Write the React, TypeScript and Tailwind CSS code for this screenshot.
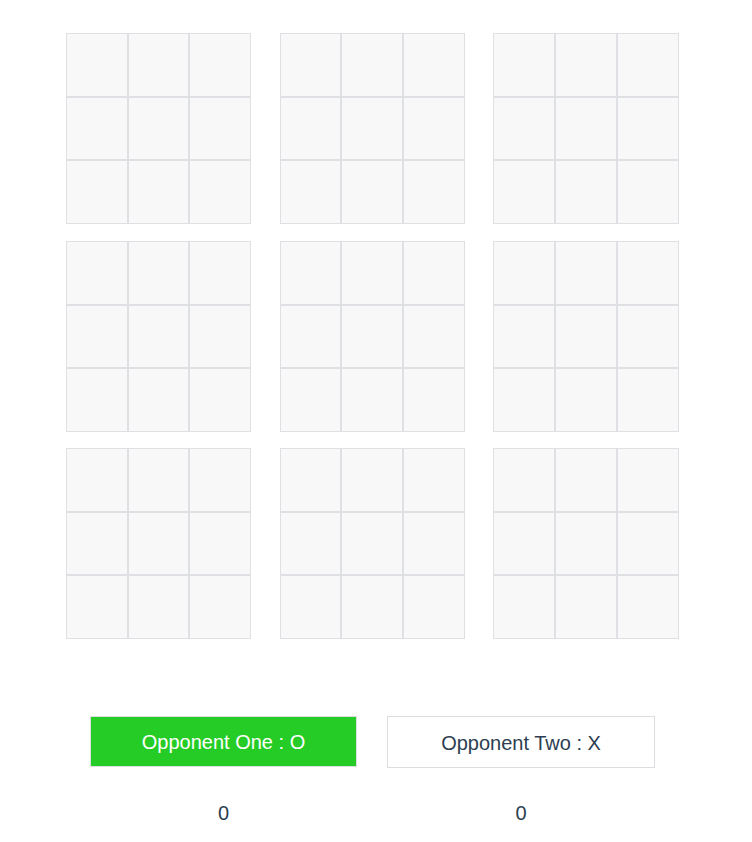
import React from "react";

const boards = Array.from({ length: 9 }, (_, i) => i);
const cells = Array.from({ length: 9 }, (_, i) => i);

function Board() {
  return (
    <div className="grid grid-cols-3 grid-rows-[64px_63px_64px]">
      {cells.map((c) => (
        <div key={c} className="border border-[#dfe0e3] bg-[#f8f8f9]" />
      ))}
    </div>
  );
}

export default function App() {
  return (
    <div className="min-h-[842px] bg-white pt-[33px] font-['Liberation_Sans',Arial,sans-serif] text-[#2c3e50]">
      <div className="ml-[66px] grid w-[613px] grid-cols-[185px_185px_186px] gap-x-[28.5px] gap-y-[16.5px]">
        {boards.map((b) => (
          <Board key={b} />
        ))}
      </div>

      <div className="mt-[77px] ml-[90px] flex gap-[30px]">
        <div className="flex w-[267px] flex-col items-center">
          <button className="flex h-[51px] w-full items-center justify-center border border-[#dcdde0] bg-[#26cc26] pt-[1px] text-[20px] text-white">
            Opponent One : O
          </button>
          <div className="mt-[31px] text-[20px]">0</div>
        </div>
        <div className="flex w-[268px] flex-col items-center">
          <button className="flex h-[52px] w-full items-center justify-center border border-[#dcdde0] bg-white pt-[1px] text-[20px] text-[#2c3e50]">
            Opponent Two : X
          </button>
          <div className="mt-[30px] text-[20px]">0</div>
        </div>
      </div>
    </div>
  );
}
